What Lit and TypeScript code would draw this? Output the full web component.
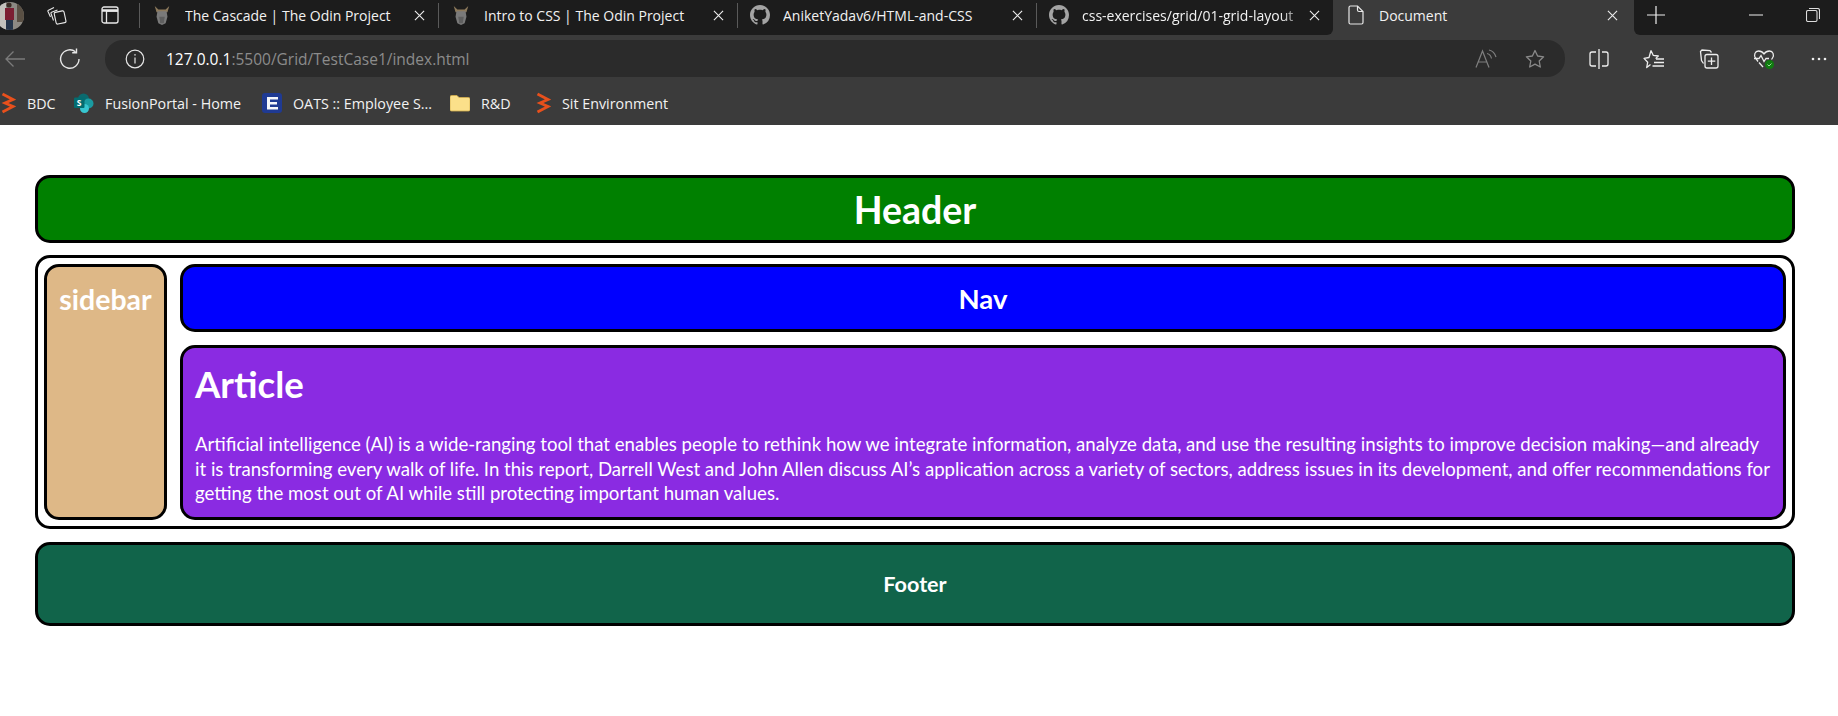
import {LitElement, html, css, svg} from 'lit';
import {customElement} from 'lit/decorators.js';

const octocat = html`<svg class="favicon" viewBox="0 0 16 16"><path fill="#a4a4a4" d="M8 0C3.58 0 0 3.58 0 8c0 3.54 2.29 6.53 5.47 7.59.4.07.55-.17.55-.38 0-.19-.01-.82-.01-1.49-2.01.37-2.53-.49-2.69-.94-.09-.23-.48-.94-.82-1.13-.28-.15-.68-.52-.01-.53.63-.01 1.08.58 1.23.82.72 1.21 1.87.87 2.33.66.07-.52.28-.87.51-1.07-1.78-.2-3.64-.89-3.64-3.95 0-.87.31-1.59.82-2.15-.08-.2-.36-1.02.08-2.12 0 0 .67-.21 2.2.82.64-.18 1.32-.27 2-.27s1.36.09 2 .27c1.53-1.04 2.2-.82 2.2-.82.44 1.1.16 1.92.08 2.12.51.56.82 1.27.82 2.15 0 3.07-1.87 3.75-3.65 3.95.29.25.54.73.54 1.48 0 1.07-.01 1.93-.01 2.2 0 .21.15.46.55.38A8.01 8.01 0 0 0 16 8c0-4.42-3.58-8-8-8z"/></svg>`;

const odin = html`<svg class="favicon" viewBox="0 0 20 22"><path fill="#8d7a5c" d="M2 1l2 7h12l2-7-4 4H6z"/><path fill="#7a7a7a" d="M5 7h10l1 6-2 7-4 2-4-2-2-7z"/><path fill="#5f5f5f" d="M7 13h6l-1 7H8z"/></svg>`;

const closeX = html`<svg class="close" viewBox="0 0 12 12"><path d="M1 1l10 10M11 1L1 11" stroke="#eee" stroke-width="1.2" fill="none"/></svg>`;

const bolt = (c: string) => svg`<path d="M2.500 2L13 7.500 5 11l8 3.500L2.500 20" fill="none" stroke="${c}" stroke-width="2.800" stroke-linejoin="miter"/>`;

const tabs = [
  {icon: odin, title: 'The Cascade | The Odin Project'},
  {icon: odin, title: 'Intro to CSS | The Odin Project'},
  {icon: octocat, title: 'AniketYadav6/HTML-and-CSS'},
  {icon: octocat, title: 'css-exercises/grid/01-grid-layout', fade: true},
];

const bookmarks = [
  {icon: html`<svg class="bm bolt" viewBox="0 0 16 22">${bolt('#e8501c')}</svg>`, label: 'BDC'},
  {
    icon: html`<svg class="bm" viewBox="0 0 20 20">
      <circle cx="9.500" cy="6" r="5.500" fill="#0b6a6e"/>
      <circle cx="14.500" cy="10.500" r="5" fill="#1a9ba1"/>
      <circle cx="10.500" cy="15.500" r="4.500" fill="#37c6d0"/>
      <rect x="0" y="4.500" width="10.500" height="10.500" rx="1" fill="#036c70"/>
      <text x="5.200" y="12.800" font-size="8.500" font-weight="700" font-family="Open Sans" fill="#fff" text-anchor="middle">S</text>
    </svg>`,
    label: 'FusionPortal - Home',
  },
  {
    icon: html`<svg class="bm" viewBox="0 0 20 20">
      <rect width="20" height="20" rx="3" fill="#1f3a93"/>
      <path d="M5 4h11v2.500H8V9h7v2.400H8v2.600h8v2.500H5z" fill="#f4f6fb"/>
    </svg>`,
    label: 'OATS :: Employee S...',
  },
  {
    icon: html`<svg class="bm" viewBox="0 0 20 20">
      <path d="M0 4a1.500 1.500 0 0 1 1.500-1.500H7L9 4.500h9.500A1.500 1.500 0 0 1 20 6v10.500a1.500 1.500 0 0 1-1.500 1.500h-17A1.500 1.500 0 0 1 0 16.500z" fill="#fbe08a" stroke="#d5b04c" stroke-width=".8"/>
    </svg>`,
    label: 'R&D',
  },
  {icon: html`<svg class="bm bolt" viewBox="0 0 16 22">${bolt('#e8501c')}</svg>`, label: 'Sit Environment'},
];

@customElement('app-root')
export class AppRoot extends LitElement {
  static styles = css`
    :host {
      display: block;
      width: 1838px;
      height: 716px;
      overflow: hidden;
      background: #fff;
      font-family: 'Open Sans', 'Noto Sans', sans-serif;
    }
    svg {
      display: block;
      flex: none;
    }

    /* tab strip */
    .strip {
      display: flex;
      height: 36px;
      background: #3b3b3b;
      color: #f2f2f2;
      font-size: 14px;
    }
    .dark {
      background: #1c1c1c;
      display: flex;
      align-items: center;
      height: 35px;
      padding-bottom: 5px;
      box-sizing: border-box;
    }
    .left {
      width: 1333px;
      border-bottom-right-radius: 6px;
      overflow: hidden;
    }
    .right {
      flex: 1;
      border-bottom-left-radius: 6px;
    }
    .avatar {
      width: 24px;
      height: 35px;
      margin-right: 23px;
      align-self: flex-start;
    }
    .strip-btn {
      width: 20px;
      height: 20px;
    }
    .strip-btn.second {
      margin-left: 33px;
      margin-right: 19px;
    }
    .tab {
      display: flex;
      align-items: center;
      width: 299px;
      height: 25px;
      box-sizing: border-box;
      border-left: 1px solid #5a5a5a;
      padding-left: 12px;
      flex: none;
    }
    .tab:last-child {
      width: 298px;
    }
    .favicon {
      width: 20px;
      height: 20px;
      margin-right: 13px;
    }
    .tab .title {
      width: 228px;
      white-space: nowrap;
      overflow: hidden;
      flex: none;
    }
    .tab .title.fade {
      width: 226px;
      -webkit-mask-image: linear-gradient(to right, #000 88%, transparent 100%);
      mask-image: linear-gradient(to right, #000 88%, transparent 100%);
    }
    .close {
      width: 11px;
      height: 11px;
      margin-left: 1px;
    }
    .active {
      display: flex;
      align-items: center;
      width: 301px;
      height: 35px;
      padding-left: 15px;
      padding-bottom: 5px;
      box-sizing: border-box;
      flex: none;
    }
    .active .doc {
      width: 16px;
      height: 20px;
      margin-right: 15px;
    }
    .active .title {
      flex: 1;
    }
    .active .close {
      margin: 0 16px 0 0;
    }
    .new-tab {
      width: 18px;
      height: 18px;
      margin-left: 13px;
    }
    .min {
      width: 14px;
      height: 14px;
      margin-left: 84px;
    }
    .restore {
      width: 14px;
      height: 14px;
      margin-left: 43px;
    }

    /* toolbar */
    .toolbar {
      display: flex;
      align-items: center;
      height: 49px;
      padding: 4px 0 8px;
      box-sizing: border-box;
      background: #3b3b3b;
    }
    .slot {
      width: 30px;
      height: 30px;
      display: flex;
      align-items: center;
      justify-content: center;
      flex: none;
    }
    .reload {
      margin-left: 25px;
      margin-right: 20px;
    }
    .address {
      display: flex;
      align-items: center;
      width: 1460px;
      height: 37px;
      background: #2b2b2b;
      border-radius: 18px;
      padding: 0 15px;
      box-sizing: border-box;
      font-size: 15.5px;
      color: #8c8c8c;
      flex: none;
    }
    .address .url {
      margin-left: 16px;
      white-space: nowrap;
    }
    .address .host {
      color: #fff;
    }
    .address .tools {
      display: flex;
      gap: 19px;
      margin-left: auto;
    }
    .actions {
      display: flex;
      gap: 25px;
      margin-left: 19px;
    }

    /* bookmarks */
    .bookmarks {
      display: grid;
      grid-template-columns: 74px 188px 188px 85px 1fr;
      align-items: center;
      height: 40px;
      padding-bottom: 4px;
      box-sizing: border-box;
      background: #3b3b3b;
      color: #f2f2f2;
      font-size: 14.3px;
    }
    .bookmark {
      display: flex;
      align-items: center;
      white-space: nowrap;
    }
    .bm {
      width: 20px;
      height: 20px;
      margin-right: 11px;
    }
    .bm.bolt {
      width: 16px;
      height: 22px;
    }

    /* page */
    .page {
      padding: 50px 43px 0 35px;
      display: flex;
      flex-direction: column;
      gap: 12px;
      font-family: Lato, 'Noto Sans', sans-serif;
      color: #fff;
    }
    .box {
      border: 3px solid #000;
      border-radius: 15px;
      box-sizing: border-box;
    }
    .header {
      height: 68px;
      background: #008000;
      display: flex;
      align-items: center;
      justify-content: center;
      font-size: 37.5px;
      font-weight: 700;
      margin: 0;
    }
    .main {
      height: 274px;
      padding: 6px;
      display: grid;
      grid-template-columns: 123px 1fr;
      grid-template-rows: 68px 175px;
      gap: 13px;
    }
    .sidebar {
      grid-row: 1 / 3;
      background: #deb887;
      text-align: center;
      font-size: 28.5px;
      font-weight: 700;
      padding-top: 15px;
      margin: 0;
    }
    .nav {
      background: #0000ff;
      display: flex;
      align-items: center;
      justify-content: center;
      font-size: 27.5px;
      font-weight: 700;
      margin: 0;
    }
    .article {
      background: #8a2be2;
      padding: 15px 12px;
    }
    .article h2 {
      margin: 0;
      font-size: 36.6px;
      line-height: 42px;
      font-weight: 700;
    }
    .article p {
      margin: 27px 0 0;
      font-size: 18.6px;
      line-height: 24.5px;
    }
    .footer {
      height: 84px;
      margin: 1px 0 0;
      background: #11644a;
      display: flex;
      align-items: center;
      justify-content: center;
      font-size: 21.6px;
      font-weight: 700;
    }
  `;

  render() {
    return html`
      <div class="strip">
        <div class="dark left">
          <svg class="avatar" viewBox="0 0 24 35">
            <defs><clipPath id="av"><circle cx="10" cy="16" r="14"/></clipPath></defs>
            <g clip-path="url(#av)">
              <rect x="-4" y="0" width="28" height="30" fill="#8d8a84"/>
              <rect x="-4" y="0" width="10" height="30" fill="#c4c2bd"/>
              <rect x="17" y="0" width="7" height="22" fill="#5a5044"/>
              <rect x="5" y="8" width="9" height="12" fill="#7c1f33"/>
              <circle cx="9" cy="5" r="2.600" fill="#3a2c25"/>
              <rect x="6" y="20" width="7" height="10" fill="#26354a"/>
            </g>
          </svg>
          <svg class="strip-btn" viewBox="0 0 20 20" fill="none" stroke="#e8e8e8" stroke-width="1.100">
            <path d="M3.500 12L1 6.500a1 1 0 0 1 .5-1.300L7 2.600"/>
            <path d="M6.500 15.500L4 8.500a1 1 0 0 1 .6-1.300L10.500 5"/>
            <rect x="8" y="6.500" width="10" height="12" rx="1.500" transform="rotate(-12 13 12)"/>
          </svg>
          <svg class="strip-btn second" viewBox="0 0 20 20" fill="none" stroke="#e8e8e8" stroke-width="1.300">
            <rect x="2" y="2" width="16" height="16" rx="2"/>
            <path d="M6.500 18V6H18" />
            <path d="M2 5.500h16" stroke-width="2.500"/>
          </svg>
          ${tabs.map(
            (t) => html`
              <div class="tab">
                ${t.icon}
                <span class="title ${t.fade ? 'fade' : ''}">${t.title}</span>
                ${closeX}
              </div>
            `
          )}
        </div>
        <div class="active">
          <svg class="doc" viewBox="0 0 16 20" fill="none" stroke="#e8e8e8" stroke-width="1.200">
            <path d="M2.500 1h7L15 6.500V17.500a1.500 1.500 0 0 1-1.500 1.500h-11A1.500 1.500 0 0 1 1 17.500V2.500A1.500 1.500 0 0 1 2.500 1z"/>
            <path d="M9.500 1v4a1.500 1.500 0 0 0 1.500 1.500h4"/>
          </svg>
          <span class="title">Document</span>
          ${closeX}
        </div>
        <div class="dark right">
          <svg class="new-tab" viewBox="0 0 18 18"><path d="M9 0v18M0 9h18" stroke="#eee" stroke-width="1.200"/></svg>
          <svg class="min" viewBox="0 0 14 14"><path d="M0 7h14" stroke="#ddd" stroke-width="1.100"/></svg>
          <svg class="restore" viewBox="0 0 14 14" fill="none" stroke="#ddd" stroke-width="1.100">
            <rect x=".5" y="2.500" width="10.500" height="11" rx="1.500"/>
            <path d="M3 .5h8.500a2 2 0 0 1 2 2V11"/>
          </svg>
        </div>
      </div>

      <div class="toolbar">
        <span class="slot">
          <svg width="22" height="18" viewBox="0 0 22 18" fill="none" stroke="#7b7b7b" stroke-width="1.300"><path d="M21 9H2M9.500 1.500L2 9l7.500 7.500"/></svg>
        </span>
        <span class="slot reload">
          <svg width="22" height="22" viewBox="0 0 22 22" fill="none" stroke="#e6e6e6" stroke-width="1.400"><path d="M16.500 3.800A9.200 9.200 0 1 0 20 11"/><path d="M17.500 .5v4.200h-4.300"/></svg>
        </span>
        <div class="address">
          <span class="slot">
            <svg width="20" height="20" viewBox="0 0 20 20" fill="none" stroke="#e6e6e6" stroke-width="1.200"><circle cx="10" cy="10" r="8.800"/><path d="M10 8.500v6"/><path d="M10 5.200v1.400" stroke-width="1.500"/></svg>
          </span>
          <span class="url"><span class="host">127.0.0.1</span>:5500/Grid/TestCase1/index.html</span>
          <div class="tools">
            <span class="slot">
              <svg width="22" height="20" viewBox="0 0 22 20" fill="none" stroke="#7f7f7f" stroke-width="1.200"><path d="M1 18.500L7.500 2 14 18.500M3.200 13h8.600"/><path d="M12 4.500c2.500.5 4 2.500 4.500 5M14 1c3.500.8 6 3.500 7 7"/></svg>
            </span>
            <span class="slot">
              <svg width="20" height="20" viewBox="0 0 20 20" fill="none" stroke="#8a8a8a" stroke-width="1.300"><path d="M10 1.500l2.600 5.500 6 .8-4.400 4.200 1.100 6L10 15.100 4.700 18l1.100-6L1.400 7.800l6-.8z" stroke-linejoin="round"/></svg>
            </span>
          </div>
        </div>
        <div class="actions">
          <span class="slot">
            <svg width="20" height="20" viewBox="0 0 20 20" fill="none" stroke="#eee" stroke-width="1.300"><path d="M10 0v20M7 3H3a2 2 0 0 0-2 2v10a2 2 0 0 0 2 2h4M13 3h4a2 2 0 0 1 2 2v10a2 2 0 0 1-2 2h-4"/></svg>
          </span>
          <span class="slot">
            <svg width="22" height="20" viewBox="0 0 22 20" fill="none" stroke="#eee" stroke-width="1.300"><path d="M8 1.500l2.200 4.800 5.100.7-2.700 2.600M7.500 15.500l-3.800 3 1-5.300L1 9.400l5-.9L8 1.500" stroke-linejoin="round"/><path d="M13 10h8M11 13.500h10M9.500 17h11.500"/></svg>
          </span>
          <span class="slot">
            <svg width="20" height="20" viewBox="0 0 20 20" fill="none" stroke="#eee" stroke-width="1.300"><path d="M12.500 3.500L11 1.600 3 1 1.500 2.500l1 9 2 3"/><rect x="6" y="5.500" width="13" height="13.500" rx="2"/><path d="M12.500 8.500v7.500M8.800 12.200h7.500"/></svg>
          </span>
          <span class="slot">
            <svg width="22" height="22" viewBox="0 0 22 22" fill="none" stroke="#eee" stroke-width="1.300"><path d="M5 13.500L2.500 10C.5 7 2 3 5.500 3c2.400 0 4.300 1.200 5.500 3 1.200-1.800 3.100-3 5.500-3 3.500 0 5 4 3 7l-1 1.500"/><path d="M1 10.500h5l2-3 3 6 2-3h3"/><path d="M6 14.500l4 4.500"/><circle cx="16.500" cy="16.500" r="4.500" fill="#107c10" stroke="none"/><path d="M14.500 16.500l1.500 1.500 2.500-2.500" stroke="#9bd89b" stroke-width="1"/></svg>
          </span>
          <span class="slot">
            <svg width="16" height="4" viewBox="0 0 16 4" fill="#eee"><circle cx="2" cy="2" r="1.300"/><circle cx="8" cy="2" r="1.300"/><circle cx="14" cy="2" r="1.300"/></svg>
          </span>
        </div>
      </div>

      <div class="bookmarks">
        ${bookmarks.map((b) => html`<div class="bookmark">${b.icon}<span>${b.label}</span></div>`)}
      </div>

      <div class="page">
        <h1 class="box header">Header</h1>
        <div class="box main">
          <h3 class="box sidebar">sidebar</h3>
          <h3 class="box nav">Nav</h3>
          <div class="box article">
            <h2>Article</h2>
            <p>Artificial intelligence (AI) is a wide-ranging tool that enables people to rethink how we integrate information, analyze data, and use the resulting insights to improve decision making—and already it is transforming every walk of life. In this report, Darrell West and John Allen discuss AI’s application across a variety of sectors, address issues in its development, and offer recommendations for getting the most out of AI while still protecting important human values.</p>
          </div>
        </div>
        <h4 class="box footer">Footer</h4>
      </div>
    `;
  }
}
